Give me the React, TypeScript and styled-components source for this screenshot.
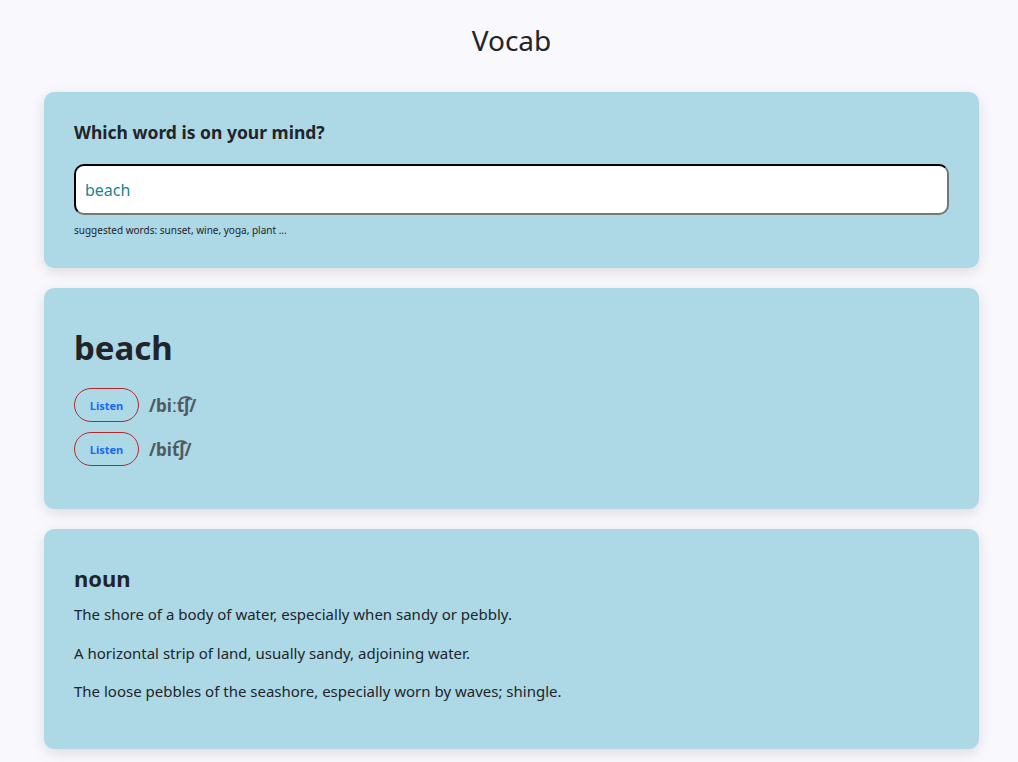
import styled, { createGlobalStyle } from "styled-components";

const GlobalStyle = createGlobalStyle`
  * {
    box-sizing: border-box;
  }
  body {
    margin: 0;
    background-color: #f8f8fd;
    color: #212529;
    font-family: "Noto Sans", "Open Sans", sans-serif;
  }
`;

const Page = styled.div`
  padding: 0 39px 20px 44px;
`;

const Title = styled.h1`
  margin: 0;
  padding: 21px 0 33px;
  text-align: center;
  font-size: 28px;
  font-weight: 400;
  line-height: 38px;
  color: #212529;
`;

const Stack = styled.div`
  display: flex;
  flex-direction: column;
  gap: 20px;
`;

const Card = styled.section<{ $pad: string }>`
  padding: ${(props) => props.$pad};
  background-color: #add8e6;
  border-radius: 10px;
  box-shadow: 0 4px 14px rgba(0, 0, 0, 0.12);
`;

const Question = styled.h2`
  margin: 0 0 20px;
  font-size: 17.5px;
  font-weight: 700;
  line-height: 24px;
`;

const SearchInput = styled.input`
  display: block;
  width: 100%;
  height: 51px;
  padding: 0 9px;
  border: 2px inset #767676;
  border-top-color: #1b1b1b;
  border-left-color: #1b1b1b;
  border-radius: 10px;
  background: #fff;
  color: #1a8591;
  font-family: inherit;
  font-size: 16px;
  outline: none;
`;

const Hint = styled.div`
  margin-top: 7px;
  font-size: 10px;
  line-height: 16px;
`;

const Word = styled.h1`
  margin: 0 0 14px;
  font-size: 33px;
  font-weight: 700;
  line-height: 52px;
`;

const Phonetics = styled.div`
  display: flex;
  flex-direction: column;
  gap: 10px;
`;

const PhoneticRow = styled.div`
  display: flex;
  align-items: center;
  gap: 10px;
`;

const ListenButton = styled.button`
  width: 65px;
  height: 34px;
  border: 1px solid #b5282a;
  border-radius: 17px;
  background: transparent;
  color: #1769f5;
  font-family: inherit;
  font-size: 11px;
  font-weight: 700;
  cursor: pointer;
`;

const Phonetic = styled.span`
  font-size: 17px;
  font-weight: 700;
  color: #4f5a60;
`;

const PartOfSpeech = styled.h3`
  margin: 0 0 10px;
  font-size: 22px;
  font-weight: 700;
  line-height: 30px;
`;

const Definition = styled.p`
  margin: 0 0 16px;
  font-size: 15px;
  line-height: 22.5px;
  &:last-child {
    margin-bottom: 0;
  }
`;

const phonetics = ["/biːt͡ʃ/", "/bit͡ʃ/"];

const definitions = [
  "The shore of a body of water, especially when sandy or pebbly.",
  "A horizontal strip of land, usually sandy, adjoining water.",
  "The loose pebbles of the seashore, especially worn by waves; shingle.",
];

export default function App() {
  return (
    <>
      <GlobalStyle />
      <Page>
        <Title>Vocab</Title>
        <Stack>
          <Card $pad="28px 30px 30px">
            <Question>Which word is on your mind?</Question>
            <SearchInput type="search" defaultValue="beach" />
            <Hint>suggested words: sunset, wine, yoga, plant ...</Hint>
          </Card>
          <Card $pad="34px 30px 43px">
            <Word>beach</Word>
            <Phonetics>
              {phonetics.map((text) => (
                <PhoneticRow key={text}>
                  <ListenButton type="button">Listen</ListenButton>
                  <Phonetic>{text}</Phonetic>
                </PhoneticRow>
              ))}
            </Phonetics>
          </Card>
          <Card $pad="34px 30px 46px">
            <PartOfSpeech>noun</PartOfSpeech>
            {definitions.map((text) => (
              <Definition key={text}>{text}</Definition>
            ))}
          </Card>
        </Stack>
      </Page>
    </>
  );
}
